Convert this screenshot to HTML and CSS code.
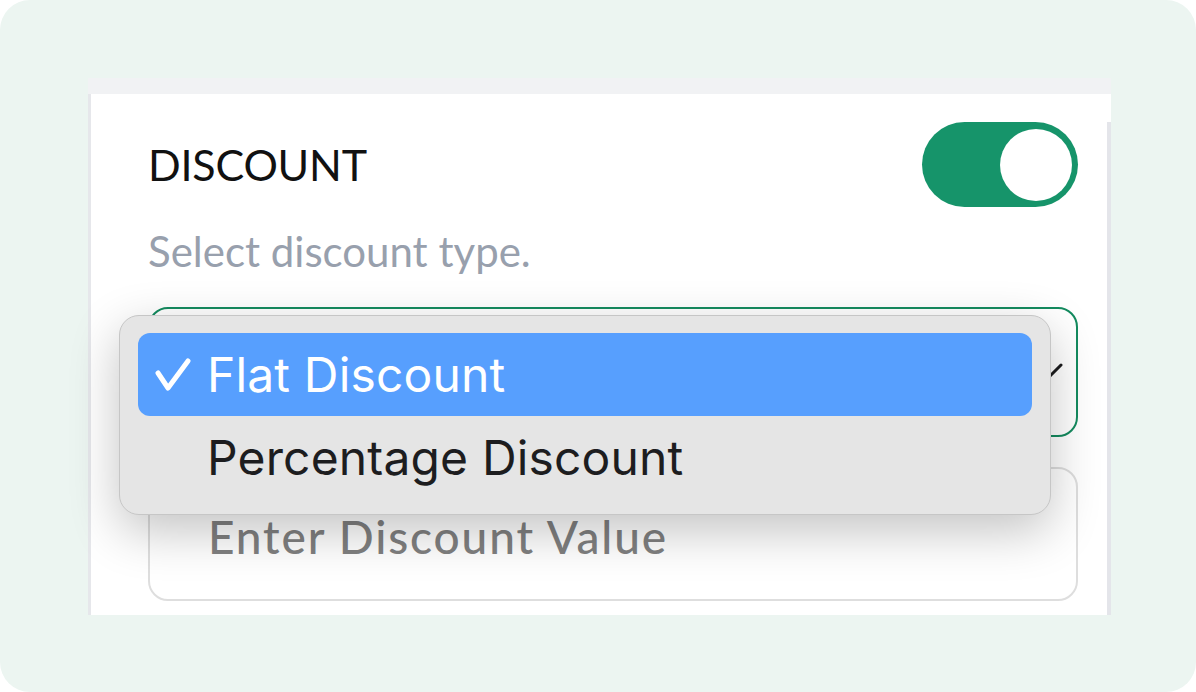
FILE: index.html
```html
<!DOCTYPE html>
<html lang="en">
<head>
<meta charset="utf-8">
<title>Discount</title>
<link rel="stylesheet" href="styles.css">
</head>
<body>
<div class="frame">
  <div class="panel">
    <div class="panel-top"></div>
    <div class="panel-body">
      <div class="content">
        <div class="header">
          <h2 class="title">DISCOUNT</h2>
          <div class="toggle"><span class="knob"></span></div>
        </div>
        <p class="hint">Select discount type.</p>
        <div class="select-wrap">
          <div class="select">
            <svg class="chevron" width="30" height="18" viewBox="0 0 30 18"><path d="M2 2 L15 15 L28 2" fill="none" stroke="#1c1c1e" stroke-width="3" stroke-linecap="round" stroke-linejoin="round"/></svg>
          </div>
          <div class="menu">
            <div class="option selected">
              <svg class="check" width="36" height="34" viewBox="0 0 36 34"><path d="M3 15 L13 30 L33 3" fill="none" stroke="#ffffff" stroke-width="5" stroke-linecap="round" stroke-linejoin="round"/></svg>
              <span class="option-label">Flat Discount</span>
            </div>
            <div class="option">
              <span class="option-label">Percentage Discount</span>
            </div>
          </div>
        </div>
        <div class="input">Enter Discount Value</div>
      </div>
      <div class="scrollbar"></div>
    </div>
  </div>
</div>
</body>
</html>
```
FILE: styles.css
```css
* { box-sizing: border-box; }
html, body { margin: 0; padding: 0; background: #ffffff; }
.frame {
  width: 1196px;
  height: 692px;
  background: #ecf5f1;
  border-radius: 30px;
  padding: 78px 0 0 88px;
  overflow: hidden;
}
.panel {
  width: 1023px;
  height: 537px;
  display: flex;
  flex-direction: column;
}
.panel-top {
  height: 16px;
  background: #f1f2f4;
}
.panel-body {
  flex: 1;
  display: flex;
  background: #ffffff;
  border-left: 3px solid #e6e7eb;
}
.content {
  flex: 1;
  padding: 28px 29px 0 57px;
}
.scrollbar {
  width: 4px;
  margin-top: 28px;
  background: #e4e5ea;
}
.header {
  height: 85px;
  display: flex;
  align-items: center;
  justify-content: space-between;
}
.title {
  margin: 0;
  font-family: Lato, "Liberation Sans", sans-serif;
  font-weight: 400;
  font-size: 43px;
  line-height: 52px;
  letter-spacing: -0.2px;
  color: #111111;
}
.toggle {
  width: 156px;
  height: 85px;
  border-radius: 43px;
  background: #16946a;
  display: flex;
  align-items: center;
  justify-content: flex-end;
  padding-right: 6px;
}
.knob {
  width: 72px;
  height: 72px;
  border-radius: 50%;
  background: #ffffff;
}
.hint {
  margin: 19px 0 0;
  font-family: Lato, "Liberation Sans", sans-serif;
  font-size: 42px;
  line-height: 50px;
  color: #98a0ad;
}
.select-wrap {
  position: relative;
  margin-top: 31px;
}
.select {
  height: 130px;
  border: 2px solid #148b5f;
  border-radius: 20px;
  display: flex;
  align-items: center;
  justify-content: flex-end;
  padding-right: 13px;
}
.chevron { display: block; }
.menu {
  position: absolute;
  left: -29px;
  top: 8px;
  width: 932px;
  height: 200px;
  background: #e5e5e5;
  border: 1px solid #c6c6c6;
  border-radius: 20px;
  padding: 17px 18px;
  box-shadow: 0 16px 50px rgba(0, 0, 0, 0.24);
  font-family: Inter, "Noto Sans", sans-serif;
}
.option {
  height: 83px;
  border-radius: 12px;
  display: flex;
  align-items: center;
  padding-left: 69px;
  position: relative;
  color: #1d1d1f;
  font-size: 48px;
  letter-spacing: 0.15px;
}
.option.selected {
  background: #579ffe;
  color: #ffffff;
}
.check {
  position: absolute;
  left: 17px;
  top: 25px;
}
.input {
  margin-top: 30px;
  height: 134px;
  border: 2px solid #dedede;
  border-radius: 20px;
  display: flex;
  align-items: center;
  padding-left: 58px;
  padding-top: 4px;
  font-family: Lato, "Liberation Sans", sans-serif;
  font-size: 46px;
  font-weight: 500;
  letter-spacing: 1.85px;
  color: #808080;
}
```
